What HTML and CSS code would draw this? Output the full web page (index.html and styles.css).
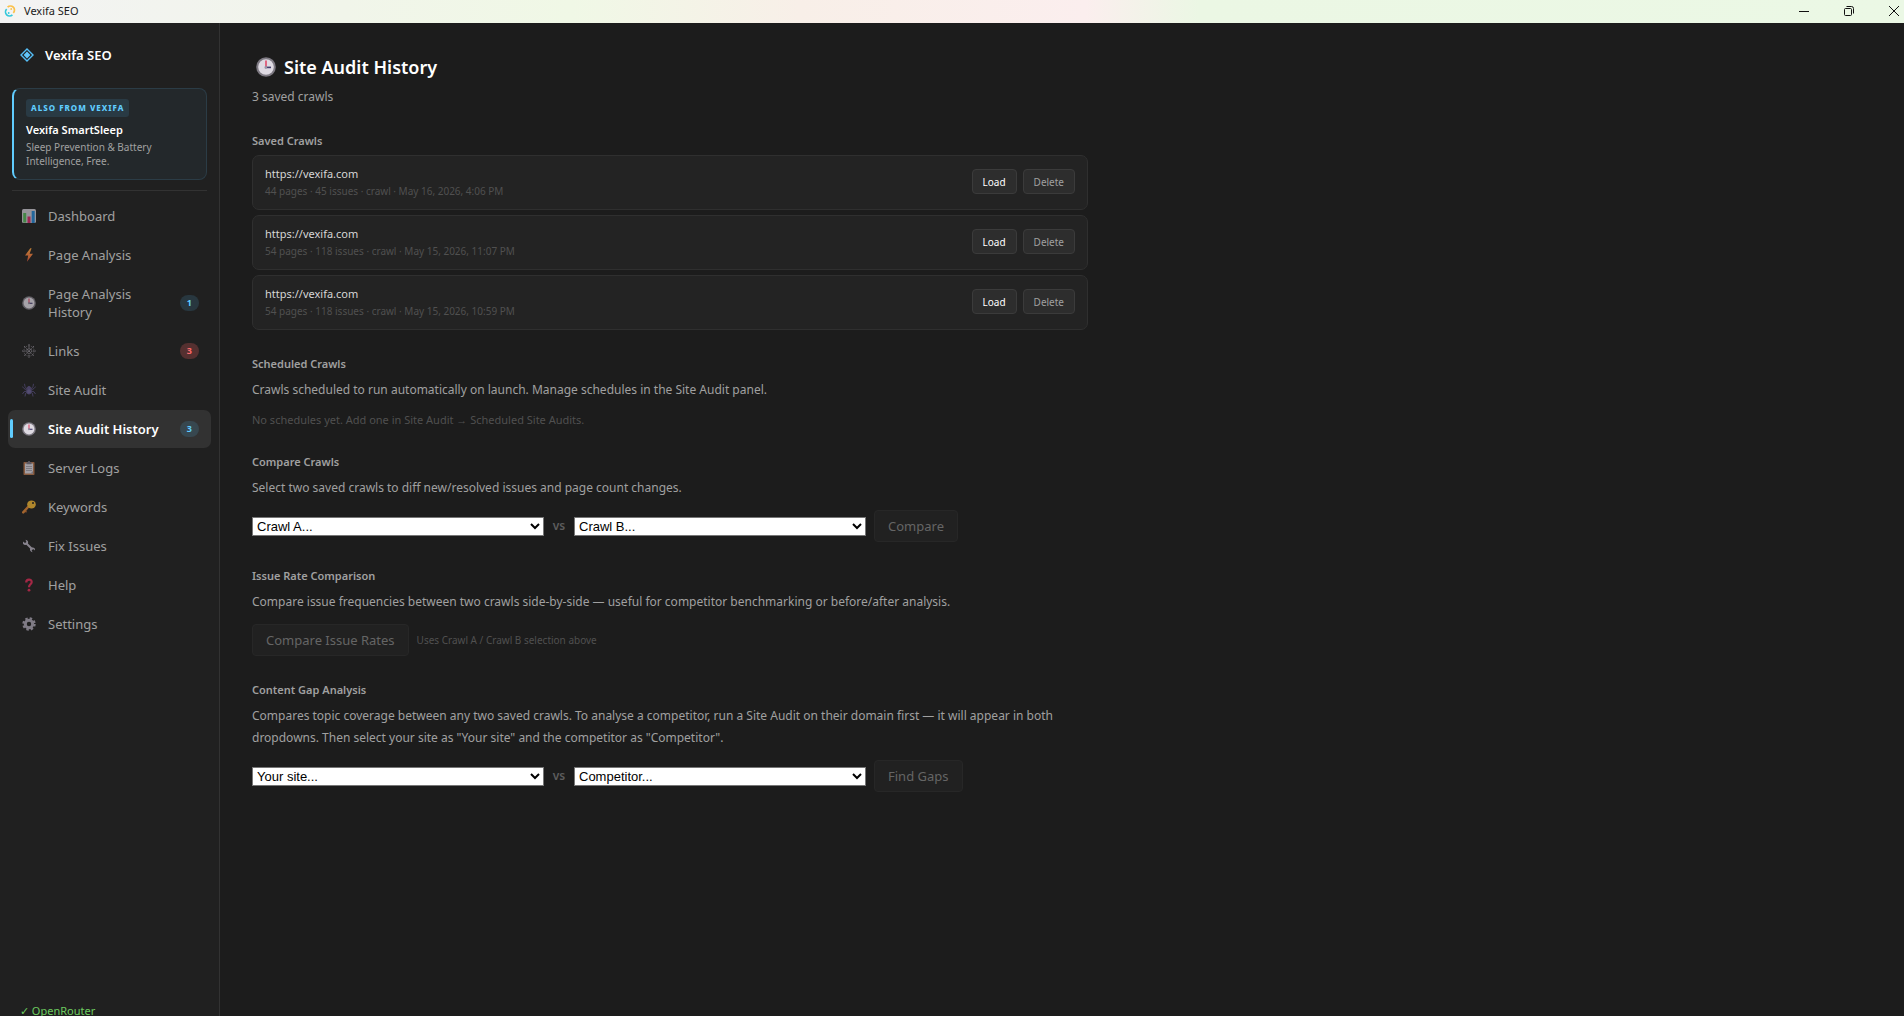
FILE: index.html
```html
<!DOCTYPE html>
<html lang="en">
<head>
<meta charset="utf-8">
<title>Vexifa SEO</title>
<link rel="stylesheet" href="styles.css">
</head>
<body>
<header class="titlebar">
  <svg class="app-icon" viewBox="0 0 14 14" fill="none" stroke-width="1.7" aria-hidden="true">
    <path d="M4.6 3.2A4 4 0 1 1 10.3 8.9" stroke="#fbc14a"/>
    <path d="M9.4 10.8A4 4 0 1 1 3.7 5.1" stroke="#35c8db"/>
    <circle cx="8.2" cy="5" r=".9" fill="#fbc14a"/><circle cx="5.7" cy="9" r=".9" fill="#35c8db"/>
  </svg>
  <span class="app-name">Vexifa SEO</span>
  <div class="window-controls">
    <button type="button" aria-label="Minimize"><svg viewBox="0 0 12 12"><path d="M1 6.5h10"/></svg></button>
    <button type="button" aria-label="Restore"><svg viewBox="0 0 12 12"><rect x="1.5" y="3.5" width="7" height="7" rx="1"/><path d="M3.5 1.5h5a2 2 0 0 1 2 2v5"/></svg></button>
    <button type="button" aria-label="Close"><svg viewBox="0 0 12 12"><path d="M1 1l10 10M11 1L1 11"/></svg></button>
  </div>
</header>

<svg class="sprite" aria-hidden="true">
  <symbol id="clock" viewBox="0 0 20 20">
    <circle cx="10" cy="10" r="9.8" fill="#7d7982"/><circle cx="10" cy="10" r="7.8" fill="#dedae2"/>
    <path d="M10 3.5V10" stroke="#e0486a" stroke-width="1.6"/><path d="M9 10.4h6" stroke="#433b6b" stroke-width="1.6"/><circle cx="9.8" cy="10.4" r="1.3" fill="#9a94a5"/>
  </symbol>
</svg>

<div class="shell">
  <aside class="sidebar">
    <div class="brand">
      <svg viewBox="0 0 14 14" aria-hidden="true"><path d="M7 1l6 6-6 6-6-6z" fill="none" stroke="#55bff8" stroke-width="1.4"/><path d="M7 3.6L10.400 7 7 10.400 3.600 7z" fill="#62c6fb"/></svg>
      <span>Vexifa SEO</span>
    </div>

    <a class="promo" href="#smartsleep">
      <span class="promo-tag">ALSO FROM VEXIFA</span>
      <strong class="promo-title">Vexifa SmartSleep</strong>
      <span class="promo-text">Sleep Prevention &amp; Battery Intelligence, Free.</span>
    </a>

    <nav class="nav">
      <a class="nav-item" href="#dashboard">
        <svg class="nav-icon" viewBox="0 0 14 14"><rect width="14" height="14" rx="1.500" fill="#c9c5ce"/><rect x="1.200" y="4" width="3" height="9.500" fill="#56b359"/><rect x="5.500" y="7.500" width="3" height="6.500" fill="#d52a6b"/><rect x="9.700" y="2" width="3" height="12" fill="#2384cf"/></svg>
        <span class="nav-label">Dashboard</span>
      </a>
      <a class="nav-item" href="#page-analysis">
        <svg class="nav-icon" viewBox="0 0 14 14"><defs><linearGradient id="bolt" x2="0" y2="1"><stop stop-color="#ffa63f"/><stop offset="1" stop-color="#ea5b3c"/></linearGradient></defs><path d="M8.300.3L3 7.500h3.200L5 13.700 11 5.800H7.600L9.600.3z" fill="url(#bolt)"/></svg>
        <span class="nav-label">Page Analysis</span>
      </a>
      <a class="nav-item" href="#page-history">
        <svg class="nav-icon"><use href="#clock"/></svg>
        <span class="nav-label">Page Analysis History</span><span class="badge">1</span>
      </a>
      <a class="nav-item" href="#links">
        <svg class="nav-icon" viewBox="0 0 14 14" fill="none" stroke="#aaa5b0" stroke-width=".8" stroke-dasharray="1.300 .9"><path d="M7 0v14M0 7h14M2 2l10 10M12 2L2 12"/><path d="M7 4l2.200.8L10 7l-.8 2.200L7 10l-2.200-.8L4 7l.8-2.200zM7 1.500l4 1.500 1.500 4-1.500 4-4 1.500L3 11 1.500 7 3 3z" stroke-width=".5"/></svg>
        <span class="nav-label">Links</span><span class="badge badge-alert">3</span>
      </a>
      <a class="nav-item" href="#site-audit">
        <svg class="nav-icon" viewBox="0 0 14 14" fill="none" stroke="#5a5082" stroke-width=".9"><path d="M5 6L3 3.500 2.500.8M9 6l2-2.500.5-2.700M5 7L2 5.500.3 3.500M9 7l3-1.500 1.700-2M5 8l-3 .8L.5 11M9 8l3 .8 1.500 2.200M5.500 9L3.500 10.500 3 13.500M8.500 9l2 1.500.5 3"/><circle cx="7" cy="5" r="1.600" fill="#5a5082"/><ellipse cx="7" cy="8.500" rx="2.300" ry="2.600" fill="#6b6196"/></svg>
        <span class="nav-label">Site Audit</span>
      </a>
      <a class="nav-item active" href="#site-audit-history" aria-current="page">
        <svg class="nav-icon"><use href="#clock"/></svg>
        <span class="nav-label">Site Audit History</span><span class="badge">3</span>
      </a>
      <a class="nav-item" href="#logs">
        <svg class="nav-icon" viewBox="0 0 14 14"><rect x="1.500" y="1" width="11" height="13" rx=".8" fill="#b5744d"/><rect x="3" y="2.500" width="8" height="10" fill="#dad6de"/><path d="M4.500 3.200V1.200h1.300a1.200 1.200 0 0 1 2.400 0h1.300v2z" fill="#77727f"/><path d="M4 5.500h6M4 7.500h6M4 9.500h6" stroke="#8e8995" stroke-width=".7"/><path d="M11 10v2.500H8.500z" fill="#9b96a3"/></svg>
        <span class="nav-label">Server Logs</span>
      </a>
      <a class="nav-item" href="#keywords">
        <svg class="nav-icon" viewBox="0 0 14 14"><path d="M6.500 6.500L1.200 12.400" stroke="#db8334" stroke-width="2.400" stroke-linecap="round"/><path d="M3.200 11l1.300 1.200" stroke="#c96d31" stroke-width="1.300"/><ellipse cx="9.500" cy="4.400" rx="4.300" ry="4" fill="#eeb332"/><circle cx="11" cy="3" r="1" fill="#202020"/></svg>
        <span class="nav-label">Keywords</span>
      </a>
      <a class="nav-item" href="#fix">
        <svg class="nav-icon" viewBox="0 0 14 14"><path d="M4 4l6.500 6.500" stroke="#b3adbc" stroke-width="2"/><path d="M1 2.500l2 1.600 1.400-1L3.500.8A3 3 0 0 1 6 4.500 3 3 0 0 1 1 4.800zM13 11.500l-2-1.600-1.400 1 .9 2.300A2.800 2.800 0 0 1 8 9.800a3 3 0 0 1 4.800-.4z" fill="#b3adbc"/></svg>
        <span class="nav-label">Fix Issues</span>
      </a>
      <a class="nav-item" href="#help">
        <svg class="nav-icon" viewBox="0 0 14 14" fill="none"><path d="M4.200 4.500C4.200 1 9.700.7 9.700 4c0 2.300-2.700 2.300-2.700 5.300" stroke="#dc2b55" stroke-width="2.200"/><circle cx="7" cy="12.200" r="1.400" fill="#dc2b55"/></svg>
        <span class="nav-label">Help</span>
      </a>
      <a class="nav-item" href="#settings">
        <svg class="nav-icon" viewBox="0 0 14 14" fill="none"><circle cx="7" cy="7" r="5.600" stroke="#a8a2b1" stroke-width="2.200" stroke-dasharray="2.400 2"/><circle cx="7" cy="7" r="3.700" stroke="#a8a2b1" stroke-width="3"/></svg>
        <span class="nav-label">Settings</span>
      </a>
    </nav>

    <div class="provider">✓ OpenRouter</div>
  </aside>

  <main class="content">
    <h1 class="page-title"><svg aria-hidden="true"><use href="#clock"/></svg>Site Audit History</h1>
    <p class="subtitle">3 saved crawls</p>

    <section class="section">
      <h2>Saved Crawls</h2>
      <ul class="crawls">
        <li class="crawl">
          <div class="crawl-info"><div class="crawl-url">https://vexifa.com</div><div class="crawl-meta">44 pages · 45 issues · crawl · May 16, 2026, 4:06 PM</div></div>
          <button class="btn-small btn-load" type="button">Load</button><button class="btn-small" type="button">Delete</button>
        </li>
        <li class="crawl">
          <div class="crawl-info"><div class="crawl-url">https://vexifa.com</div><div class="crawl-meta">54 pages · 118 issues · crawl · May 15, 2026, 11:07 PM</div></div>
          <button class="btn-small btn-load" type="button">Load</button><button class="btn-small" type="button">Delete</button>
        </li>
        <li class="crawl">
          <div class="crawl-info"><div class="crawl-url">https://vexifa.com</div><div class="crawl-meta">54 pages · 118 issues · crawl · May 15, 2026, 10:59 PM</div></div>
          <button class="btn-small btn-load" type="button">Load</button><button class="btn-small" type="button">Delete</button>
        </li>
      </ul>
    </section>

    <section class="section">
      <h2>Scheduled Crawls</h2>
      <p>Crawls scheduled to run automatically on launch. Manage schedules in the Site Audit panel.</p>
      <div class="empty">No schedules yet. Add one in Site Audit → Scheduled Site Audits.</div>
    </section>

    <section class="section">
      <h2>Compare Crawls</h2>
      <p>Select two saved crawls to diff new/resolved issues and page count changes.</p>
      <div class="row">
        <select aria-label="Crawl A"><option>Crawl A...</option></select>
        <span class="vs">vs</span>
        <select aria-label="Crawl B"><option>Crawl B...</option></select>
        <button class="btn" type="button" disabled>Compare</button>
      </div>
    </section>

    <section class="section">
      <h2>Issue Rate Comparison</h2>
      <p>Compare issue frequencies between two crawls side-by-side — useful for competitor benchmarking or before/after analysis.</p>
      <div class="row">
        <button class="btn" type="button" disabled>Compare Issue Rates</button>
        <span class="hint">Uses Crawl A / Crawl B selection above</span>
      </div>
    </section>

    <section class="section">
      <h2>Content Gap Analysis</h2>
      <p>Compares topic coverage between any two saved crawls. To analyse a competitor, run a Site Audit on their domain first — it will appear in both dropdowns. Then select your site as "Your site" and the competitor as "Competitor".</p>
      <div class="row">
        <select aria-label="Your site"><option>Your site...</option></select>
        <span class="vs">vs</span>
        <select aria-label="Competitor"><option>Competitor...</option></select>
        <button class="btn" type="button" disabled>Find Gaps</button>
      </div>
    </section>
  </main>
</div>
</body>
</html>
```

FILE: styles.css
```css
* { box-sizing: border-box; }

body {
  margin: 0;
  height: 100vh;
  overflow: hidden;
  background: #1c1c1c;
  color: #a0a0a0;
  font: 12px/18px "Segoe UI", "Noto Sans", sans-serif;
}

h1, h2, p, ul { margin: 0; padding: 0; }
a { color: inherit; text-decoration: none; }
button { font-family: inherit; }
.sprite { display: none; }

/* Window title bar */
.titlebar {
  display: flex;
  align-items: center;
  height: 23px;
  padding: 0 1px 1px 3px;
  background: linear-gradient(90deg, #f3f3f3 0%, #f1f5ea 18%, #f0f8e6 30%, #f8efe8 42%, #fbeeee 57%, #ebf7e4 63%, #ebf8e5 100%);
  color: #1a1a1a;
  font-size: 11px;
}
.app-icon { width: 14px; height: 14px; }
.app-name { margin-left: 7px; }
.window-controls { display: flex; margin-left: auto; }
.window-controls button {
  display: grid;
  place-items: center;
  width: 45px;
  height: 22px;
  padding: 0;
  border: 0;
  background: none;
}
.window-controls button:last-child { width: 18px; margin-left: 14px; }
.window-controls svg { width: 12px; height: 12px; fill: none; stroke: #111; }

.shell { display: flex; height: calc(100vh - 19px); }

/* Sidebar */
.sidebar {
  display: flex;
  flex-direction: column;
  flex: 0 0 220px;
  border-right: 1px solid #323232;
  background: #202020;
}
.brand {
  display: flex;
  align-items: center;
  gap: 11px;
  padding: 22px 20px 23px;
  color: #fff;
  font-size: 13px;
  font-weight: 600;
  line-height: 20px;
}
.brand svg { width: 14px; height: 14px; }

.promo {
  display: flex;
  flex-direction: column;
  align-items: flex-start;
  margin: 0 12px;
  padding: 10px 12px 11px;
  border: 1px solid #2b3c46;
  border-left: 2px solid #60cdff;
  border-radius: 8px;
  background: #23282b;
}
.promo-tag {
  padding: 0 5px;
  border-radius: 3px;
  background: #293a44;
  color: #60cdff;
  font-size: 8px;
  font-weight: 800;
  letter-spacing: 1px;
}
.promo-title { margin-top: 4px; color: #fff; font-size: 11px; font-weight: 600; }
.promo-text { margin-top: 1px; font-size: 10px; line-height: 14px; }

.nav {
  display: flex;
  flex-direction: column;
  gap: 1px;
  margin: 10px 12px 0;
  padding-top: 6px;
  border-top: 1px solid #323232;
}
.nav-item {
  position: relative;
  display: flex;
  align-items: center;
  gap: 12px;
  margin: 0 -4px;
  padding: 10px 12px 10px 14px;
  border-radius: 7px;
  font-size: 13px;
}
.nav-icon { flex: none; width: 14px; height: 14px; opacity: .7; }
.nav-label { flex: 1; }
.badge {
  padding: 0 7px;
  border-radius: 8px;
  background: #28373f;
  color: #60cdff;
  font-size: 9px;
  font-weight: 700;
  line-height: 16px;
}
.badge-alert { background: #553030; color: #ff6b6b; }
.nav-item.active { background: #323232; color: #fff; font-weight: 600; }
.active .nav-icon { opacity: 1; }
.active .badge { background: #37474f; }
.active::before {
  content: "";
  position: absolute;
  left: 2px;
  top: 9px;
  bottom: 10px;
  width: 3px;
  border-radius: 2px;
  background: #60cdff;
}
.provider { margin-top: auto; padding-left: 20px; color: #6ccb5f; font-size: 11px; }

/* Page */
.content { flex: 1; max-width: 900px; padding: 30px 32px; }
.page-title {
  display: flex;
  align-items: center;
  gap: 8px;
  padding-left: 4px;
  color: #fff;
  font-size: 18px;
  font-weight: 600;
  line-height: 28px;
}
.page-title svg { width: 20px; height: 20px; }
.subtitle { margin-top: 6px; line-height: 20px; }

.section { margin-top: 26px; }
.section h2 { margin-bottom: 6px; font-size: 11px; font-weight: 600; line-height: 16px; }
.section p { margin-top: 7px; line-height: 22px; }

.crawls { display: grid; gap: 5px; list-style: none; }
.crawl {
  display: flex;
  align-items: center;
  gap: 6px;
  padding: 8px 12px 10px;
  border: 1px solid #2f2f2f;
  border-radius: 7px;
  background: #232323;
}
.crawl-info { flex: 1; }
.crawl-url { color: #d6d6d6; font-size: 11px; line-height: 19px; }
.crawl-meta, .hint { color: #505050; font-size: 10px; line-height: 16px; }
.empty { margin-top: 11px; color: #505050; font-size: 11px; line-height: 16px; }

.btn-small {
  height: 25px;
  padding: 0 10px;
  border: 1px solid #3b3b3b;
  border-radius: 4px;
  background: #2d2d2d;
  color: #a0a0a0;
  font-size: 10px;
}
.btn-load { color: #fff; }

.row { display: flex; align-items: center; gap: 8px; margin-top: 11px; }
.row select {
  width: 292px;
  height: 19px;
  padding: 0;
  border: 1px solid #767676;
  border-radius: 0;
  background: #fff;
  color: #000;
  font: 13px "Liberation Sans", Arial, sans-serif;
}
.vs { min-width: 14px; color: #5c5c5c; font-weight: 600; text-align: center; }
.btn {
  height: 32px;
  padding: 0 13px;
  border: 1px solid #272727;
  border-radius: 4px;
  background: #212121;
  color: #656565;
  font-size: 13px;
}
```
